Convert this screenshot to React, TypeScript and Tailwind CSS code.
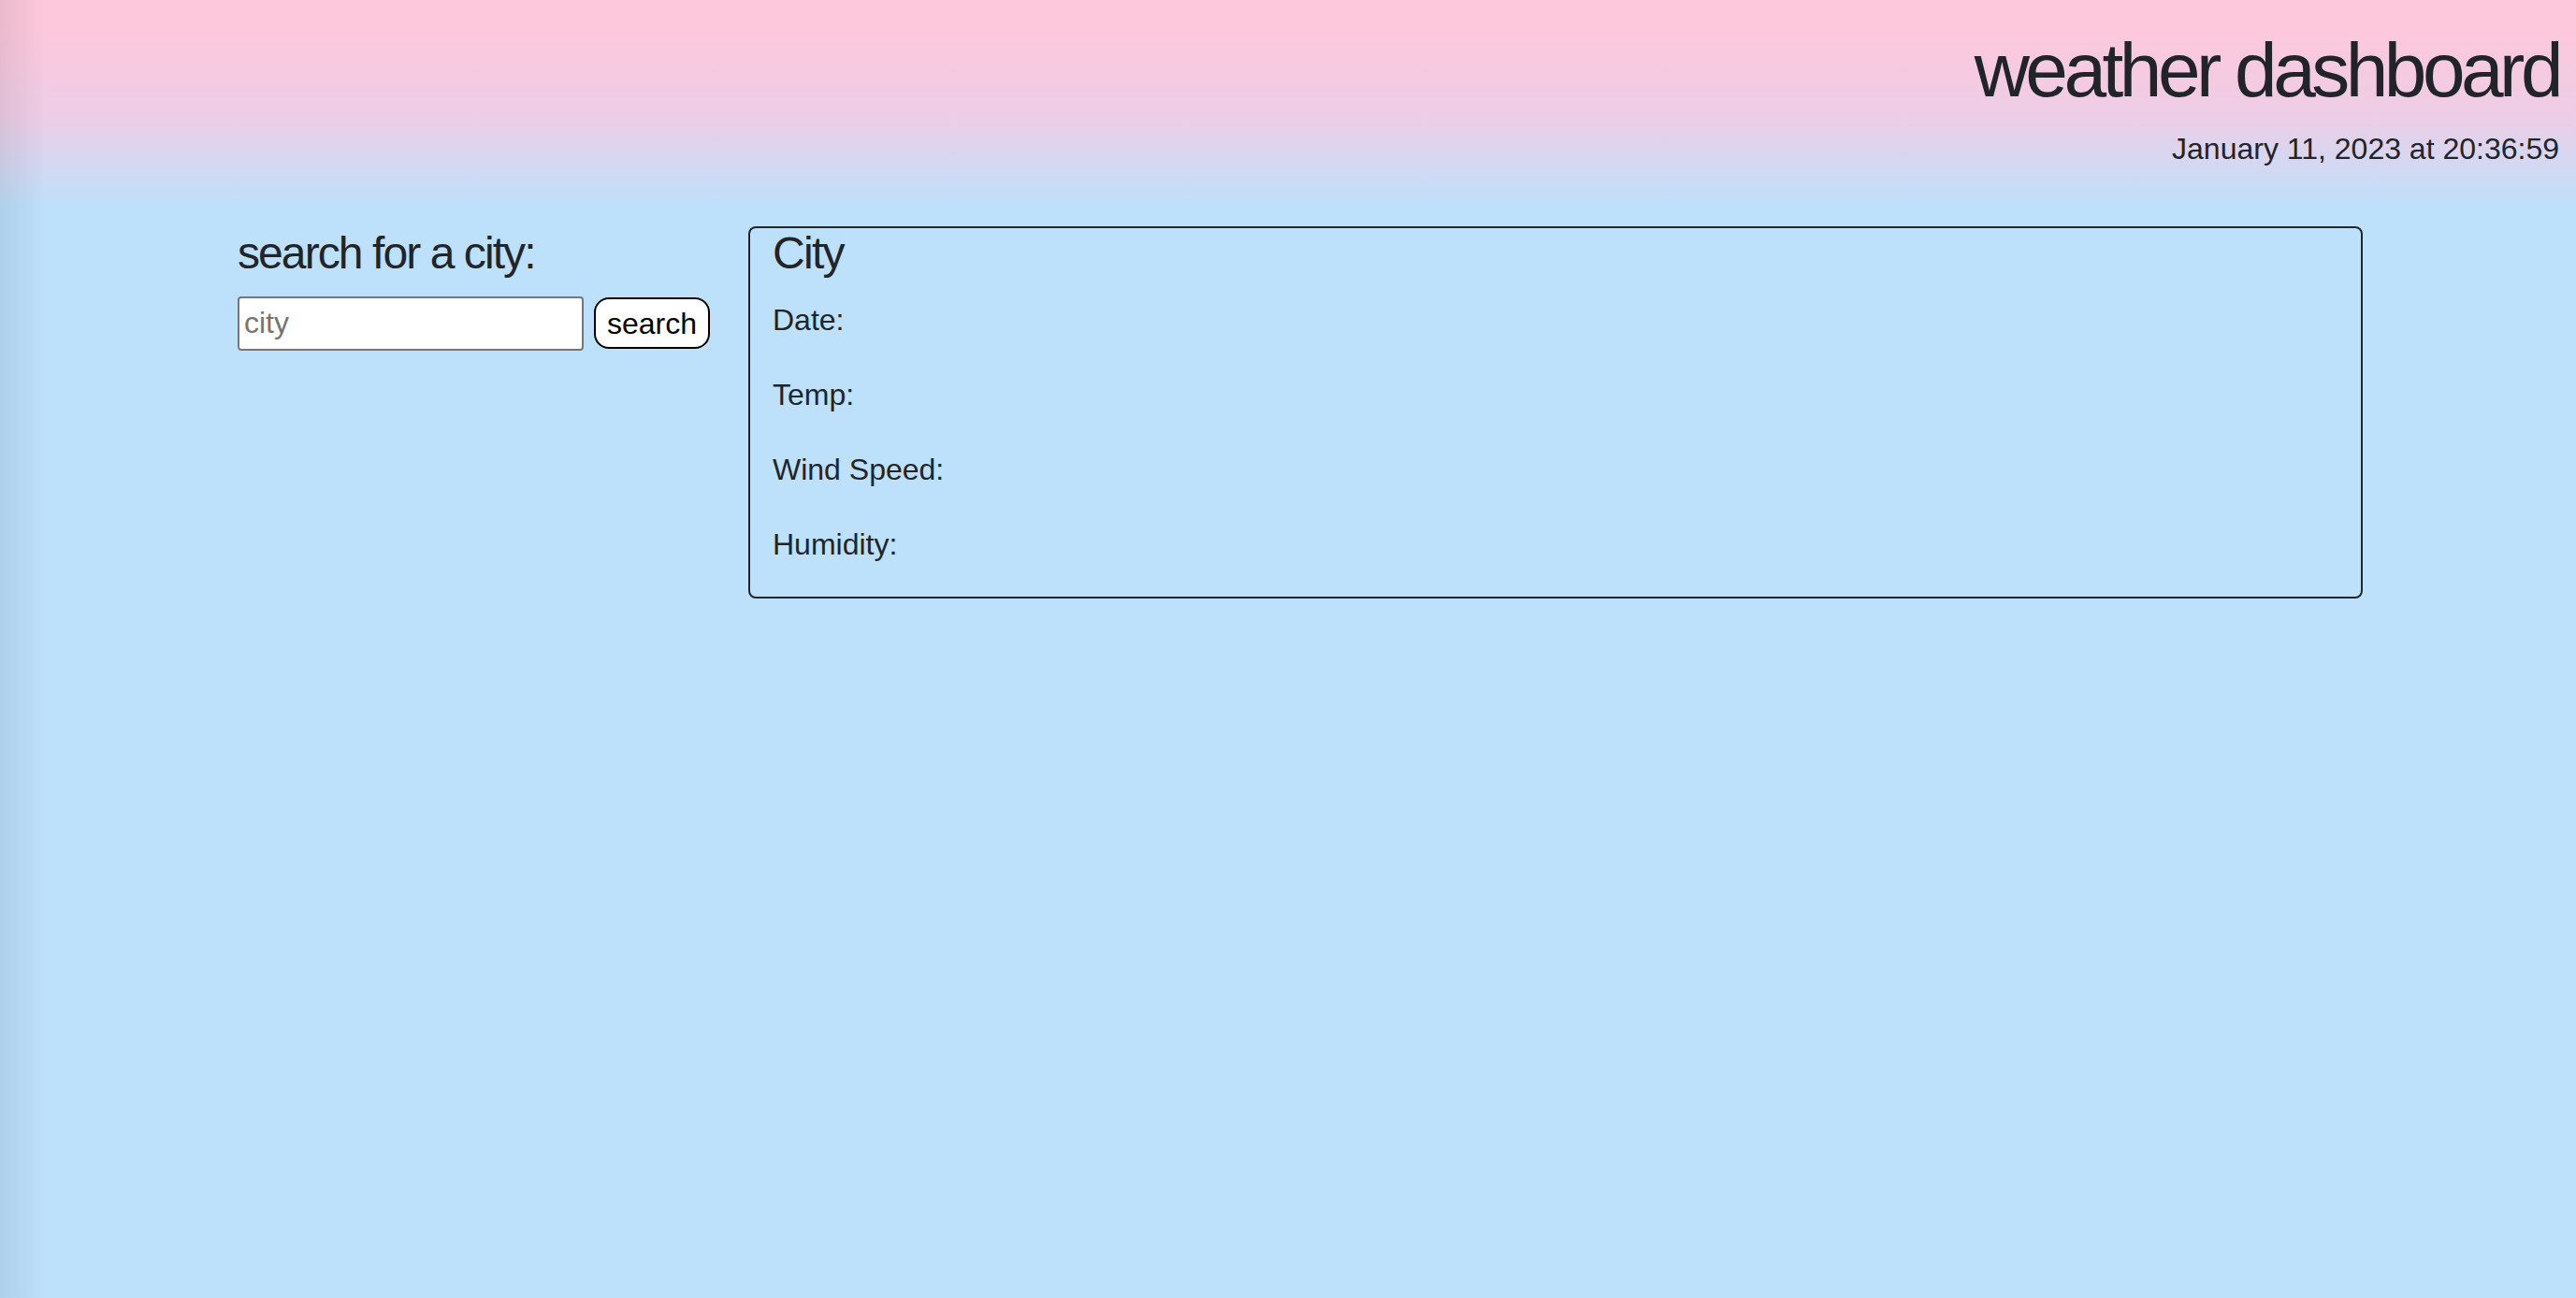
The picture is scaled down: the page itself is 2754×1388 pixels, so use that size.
const labels = ["Date:", "Temp:", "Wind Speed:", "Humidity:"];

export default function App() {
  return (
    <div className="relative min-h-screen bg-[#bde0fb] font-['Liberation_Sans',Arial,sans-serif] text-[#212529]">
      {/* soft shade along the left edge */}
      <div className="pointer-events-none absolute inset-y-0 left-0 w-[50px] bg-gradient-to-r from-black/[0.07] to-transparent" />

      <header className="flex flex-col items-end bg-gradient-to-b from-[#fdc8dc] from-15% via-[#edcde6] via-55% to-[#bde0fb] pt-[25px] pr-[18px] pb-[38px]">
        <h1 className="text-[82px] leading-[100px] tracking-[-0.055em] font-light">
          weather dashboard
        </h1>
        <p className="mt-[10px] text-[32px] leading-[48px]">January 11, 2023 at 20:36:59</p>
      </header>

      <main className="flex items-start pt-[21px] pl-[254px]">
        <section className="w-[546px]">
          <h4 className="text-[48px] leading-[57.6px] tracking-[-0.04em]">search for a city:</h4>
          <form className="mt-[17px] flex items-center gap-[11px]" onSubmit={(e) => e.preventDefault()}>
            <input
              type="text"
              placeholder="city"
              className="h-[58px] w-[370px] rounded-[4px] border-2 border-[#767676] bg-white px-[5px] text-[32px] text-black placeholder-[#757575] outline-none"
            />
            <button
              type="submit"
              className="h-[55px] rounded-[16px] border-2 border-black bg-white px-[12px] text-[32px] text-black"
            >
              search
            </button>
          </form>
        </section>

        <section className="w-[1726px] rounded-[8px] border-2 border-[#212529] px-[24px]">
          <h4 className="text-[48px] leading-[54px] tracking-[-0.035em]">City</h4>
          <div className="mt-[20px]">
            {labels.map((label) => (
              <p key={label} className="mb-[32px] text-[32px] leading-[48px]">
                {label}
              </p>
            ))}
          </div>
        </section>
      </main>
    </div>
  );
}
